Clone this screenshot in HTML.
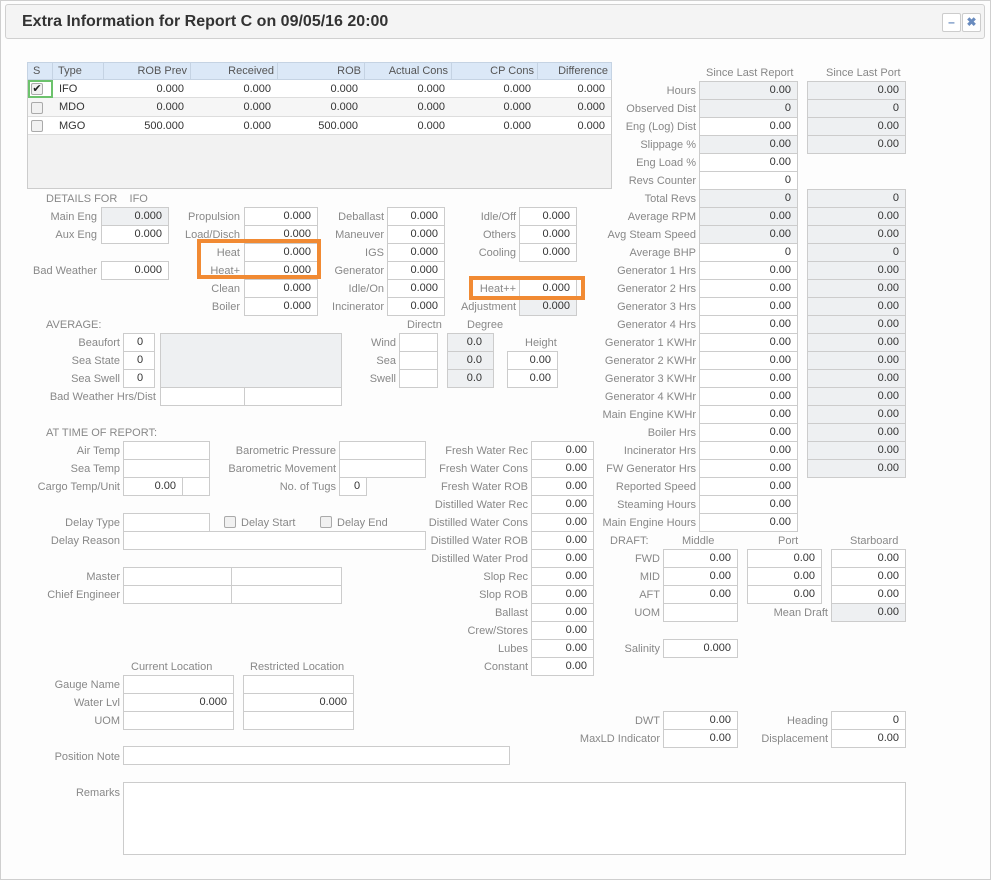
<!DOCTYPE html>
<html><head><meta charset="utf-8"><style>
*{box-sizing:border-box;margin:0;padding:0}
body{width:991px;height:881px;background:#fff;font-family:"Liberation Sans",Arial,sans-serif;font-size:11px;color:#333;position:relative;overflow:hidden}
#frame{position:absolute;left:0;top:0;width:991px;height:880px;border:1px solid #cfcfcf;background:#fdfdfd}
#hdr{position:absolute;left:5px;top:4px;width:980px;height:35px;border:1px solid #d0d0d0;border-radius:3px;background:#f4f4f4}
#hdr h1{position:absolute;left:16px;top:8px;font-size:16px;font-weight:bold;color:#333;letter-spacing:0px}
.btn{position:absolute;top:8px;width:19px;height:19px;border:1px solid #ccc;border-radius:2px;background:#fff;color:#6a8cbf;font-size:12px;text-align:center;line-height:17px;font-weight:bold}
.l{position:absolute;left:0;text-align:right;color:#888;height:18px;line-height:20px;white-space:nowrap}
.t{position:absolute;color:#888;height:18px;line-height:20px;white-space:nowrap}
.b{position:absolute;height:19px;border:1px solid #ccc;background:#fff;text-align:right;padding-right:6px;line-height:17px;color:#333}
.g{background:#eef0f2}
.o{position:absolute;border:4px solid #f18a33}
#tbl{position:absolute;left:27px;top:62px;width:585px;height:127px;border:1px solid #ccc;background:#f2f2f2}
.cb{position:absolute;width:12px;height:12px;border:1px solid #aaa;border-radius:2px;background:#f1f1f1}
</style></head><body>
<div id="frame"></div>
<div id="hdr"><h1>Extra Information for Report C on 09/05/16 20:00</h1>
<div class="btn" style="left:936px">–</div><div class="btn" style="left:956px">✖</div></div>

<div id="tbl"></div>
<div style="position:absolute;left:27px;top:62px;width:585px;height:18px;background:#dbe8f7;border:1px solid #c5d3e3"></div>
<div style="position:absolute;left:28px;top:80px;width:583px;height:18px;background:#fff;border-bottom:1px solid #ddd"></div>
<div style="position:absolute;left:28px;top:98px;width:583px;height:19px;background:#f6f6f6;border-bottom:1px solid #ddd"></div>
<div style="position:absolute;left:28px;top:117px;width:583px;height:18px;background:#fff;border-bottom:1px solid #ddd"></div>
<div style="position:absolute;left:52px;top:62px;width:1px;height:18px;background:#c5d3e3"></div>
<div style="position:absolute;left:103px;top:62px;width:1px;height:18px;background:#c5d3e3"></div>
<div style="position:absolute;left:190px;top:62px;width:1px;height:18px;background:#c5d3e3"></div>
<div style="position:absolute;left:277px;top:62px;width:1px;height:18px;background:#c5d3e3"></div>
<div style="position:absolute;left:364px;top:62px;width:1px;height:18px;background:#c5d3e3"></div>
<div style="position:absolute;left:451px;top:62px;width:1px;height:18px;background:#c5d3e3"></div>
<div style="position:absolute;left:537px;top:62px;width:1px;height:18px;background:#c5d3e3"></div>
<div class="t" style="left:33px;top:61px;color:#555">S</div>
<div class="t" style="left:58px;top:61px;color:#555">Type</div>
<div class="l" style="width:187px;top:61px;color:#555">ROB Prev</div>
<div class="l" style="width:274px;top:61px;color:#555">Received</div>
<div class="l" style="width:361px;top:61px;color:#555">ROB</div>
<div class="l" style="width:448px;top:61px;color:#555">Actual Cons</div>
<div class="l" style="width:534px;top:61px;color:#555">CP Cons</div>
<div class="l" style="width:608px;top:61px;color:#555">Difference</div>
<div style="position:absolute;left:28px;top:80px;width:25px;height:18px;border:2px solid #6cc26c"></div>
<div class="cb" style="left:31px;top:83px;font-size:11px;line-height:10px;text-align:center;color:#222">✔</div>
<div class="cb" style="left:31px;top:102px"></div>
<div class="cb" style="left:31px;top:120px"></div>
<div class="t" style="left:59px;top:79px;color:#333">IFO</div>
<div class="t" style="left:59px;top:97px;color:#333">MDO</div>
<div class="t" style="left:59px;top:116px;color:#333">MGO</div>
<div class="l" style="width:184px;top:79px;color:#333">0.000</div><div class="l" style="width:271px;top:79px;color:#333">0.000</div><div class="l" style="width:358px;top:79px;color:#333">0.000</div><div class="l" style="width:445px;top:79px;color:#333">0.000</div><div class="l" style="width:531px;top:79px;color:#333">0.000</div><div class="l" style="width:605px;top:79px;color:#333">0.000</div>
<div class="l" style="width:184px;top:97px;color:#333">0.000</div><div class="l" style="width:271px;top:97px;color:#333">0.000</div><div class="l" style="width:358px;top:97px;color:#333">0.000</div><div class="l" style="width:445px;top:97px;color:#333">0.000</div><div class="l" style="width:531px;top:97px;color:#333">0.000</div><div class="l" style="width:605px;top:97px;color:#333">0.000</div>
<div class="l" style="width:184px;top:116px;color:#333">500.000</div><div class="l" style="width:271px;top:116px;color:#333">0.000</div><div class="l" style="width:358px;top:116px;color:#333">500.000</div><div class="l" style="width:445px;top:116px;color:#333">0.000</div><div class="l" style="width:531px;top:116px;color:#333">0.000</div><div class="l" style="width:605px;top:116px;color:#333">0.000</div>

<div class="t" style="left:46px;top:189px">DETAILS FOR&nbsp;&nbsp;&nbsp; IFO</div>
<div class="l" style="width:97px;top:207px">Main Eng</div><div class="b g" style="left:101px;top:207px;width:68px">0.000</div>
<div class="l" style="width:97px;top:225px">Aux Eng</div><div class="b" style="left:101px;top:225px;width:68px">0.000</div>
<div class="l" style="width:97px;top:261px">Bad Weather</div><div class="b" style="left:101px;top:261px;width:68px">0.000</div>

<div class="l" style="width:240px;top:207px">Propulsion</div><div class="b" style="left:244px;top:207px;width:74px">0.000</div>
<div class="l" style="width:240px;top:225px">Load/Disch</div><div class="b" style="left:244px;top:225px;width:74px">0.000</div>
<div class="l" style="width:240px;top:243px">Heat</div><div class="b" style="left:244px;top:243px;width:74px">0.000</div>
<div class="l" style="width:240px;top:261px">Heat+</div><div class="b" style="left:244px;top:261px;width:74px">0.000</div>
<div class="l" style="width:240px;top:279px">Clean</div><div class="b" style="left:244px;top:279px;width:74px">0.000</div>
<div class="l" style="width:240px;top:297px">Boiler</div><div class="b" style="left:244px;top:297px;width:74px">0.000</div>

<div class="l" style="width:384px;top:207px">Deballast</div><div class="b" style="left:387px;top:207px;width:58px">0.000</div>
<div class="l" style="width:384px;top:225px">Maneuver</div><div class="b" style="left:387px;top:225px;width:58px">0.000</div>
<div class="l" style="width:384px;top:243px">IGS</div><div class="b" style="left:387px;top:243px;width:58px">0.000</div>
<div class="l" style="width:384px;top:261px">Generator</div><div class="b" style="left:387px;top:261px;width:58px">0.000</div>
<div class="l" style="width:384px;top:279px">Idle/On</div><div class="b" style="left:387px;top:279px;width:58px">0.000</div>
<div class="l" style="width:384px;top:297px">Incinerator</div><div class="b" style="left:387px;top:297px;width:58px">0.000</div>

<div class="l" style="width:516px;top:207px">Idle/Off</div><div class="b" style="left:519px;top:207px;width:58px">0.000</div>
<div class="l" style="width:516px;top:225px">Others</div><div class="b" style="left:519px;top:225px;width:58px">0.000</div>
<div class="l" style="width:516px;top:243px">Cooling</div><div class="b" style="left:519px;top:243px;width:58px">0.000</div>
<div class="l" style="width:516px;top:279px">Heat++</div><div class="b" style="left:519px;top:279px;width:58px">0.000</div>
<div class="l" style="width:516px;top:297px">Adjustment</div><div class="b g" style="left:519px;top:297px;width:58px">0.000</div>
<div class="o" style="left:197px;top:239px;width:124px;height:40px"></div>
<div class="o" style="left:469px;top:276px;width:116px;height:24px"></div>

<div class="t" style="left:706px;top:63px">Since Last Report</div>
<div class="t" style="left:826px;top:63px">Since Last Port</div>
<div class="l" style="width:696px;top:81px">Hours</div><div class="b g" style="left:699px;top:81px;width:99px">0.00</div><div class="b g" style="left:807px;top:81px;width:99px">0.00</div>
<div class="l" style="width:696px;top:99px">Observed Dist</div><div class="b g" style="left:699px;top:99px;width:99px">0</div><div class="b g" style="left:807px;top:99px;width:99px">0</div>
<div class="l" style="width:696px;top:117px">Eng (Log) Dist</div><div class="b" style="left:699px;top:117px;width:99px">0.00</div><div class="b g" style="left:807px;top:117px;width:99px">0.00</div>
<div class="l" style="width:696px;top:135px">Slippage %</div><div class="b g" style="left:699px;top:135px;width:99px">0.00</div><div class="b g" style="left:807px;top:135px;width:99px">0.00</div>
<div class="l" style="width:696px;top:153px">Eng Load %</div><div class="b" style="left:699px;top:153px;width:99px">0.00</div>
<div class="l" style="width:696px;top:171px">Revs Counter</div><div class="b" style="left:699px;top:171px;width:99px">0</div>
<div class="l" style="width:696px;top:189px">Total Revs</div><div class="b g" style="left:699px;top:189px;width:99px">0</div><div class="b g" style="left:807px;top:189px;width:99px">0</div>
<div class="l" style="width:696px;top:207px">Average RPM</div><div class="b g" style="left:699px;top:207px;width:99px">0.00</div><div class="b g" style="left:807px;top:207px;width:99px">0.00</div>
<div class="l" style="width:696px;top:225px">Avg Steam Speed</div><div class="b g" style="left:699px;top:225px;width:99px">0.00</div><div class="b g" style="left:807px;top:225px;width:99px">0.00</div>
<div class="l" style="width:696px;top:243px">Average BHP</div><div class="b" style="left:699px;top:243px;width:99px">0</div><div class="b g" style="left:807px;top:243px;width:99px">0</div>
<div class="l" style="width:696px;top:261px">Generator 1 Hrs</div><div class="b" style="left:699px;top:261px;width:99px">0.00</div><div class="b g" style="left:807px;top:261px;width:99px">0.00</div>
<div class="l" style="width:696px;top:279px">Generator 2 Hrs</div><div class="b" style="left:699px;top:279px;width:99px">0.00</div><div class="b g" style="left:807px;top:279px;width:99px">0.00</div>
<div class="l" style="width:696px;top:297px">Generator 3 Hrs</div><div class="b" style="left:699px;top:297px;width:99px">0.00</div><div class="b g" style="left:807px;top:297px;width:99px">0.00</div>
<div class="l" style="width:696px;top:315px">Generator 4 Hrs</div><div class="b" style="left:699px;top:315px;width:99px">0.00</div><div class="b g" style="left:807px;top:315px;width:99px">0.00</div>
<div class="l" style="width:696px;top:333px">Generator 1 KWHr</div><div class="b" style="left:699px;top:333px;width:99px">0.00</div><div class="b g" style="left:807px;top:333px;width:99px">0.00</div>
<div class="l" style="width:696px;top:351px">Generator 2 KWHr</div><div class="b" style="left:699px;top:351px;width:99px">0.00</div><div class="b g" style="left:807px;top:351px;width:99px">0.00</div>
<div class="l" style="width:696px;top:369px">Generator 3 KWHr</div><div class="b" style="left:699px;top:369px;width:99px">0.00</div><div class="b g" style="left:807px;top:369px;width:99px">0.00</div>
<div class="l" style="width:696px;top:387px">Generator 4 KWHr</div><div class="b" style="left:699px;top:387px;width:99px">0.00</div><div class="b g" style="left:807px;top:387px;width:99px">0.00</div>
<div class="l" style="width:696px;top:405px">Main Engine KWHr</div><div class="b" style="left:699px;top:405px;width:99px">0.00</div><div class="b g" style="left:807px;top:405px;width:99px">0.00</div>
<div class="l" style="width:696px;top:423px">Boiler Hrs</div><div class="b" style="left:699px;top:423px;width:99px">0.00</div><div class="b g" style="left:807px;top:423px;width:99px">0.00</div>
<div class="l" style="width:696px;top:441px">Incinerator Hrs</div><div class="b" style="left:699px;top:441px;width:99px">0.00</div><div class="b g" style="left:807px;top:441px;width:99px">0.00</div>
<div class="l" style="width:696px;top:459px">FW Generator Hrs</div><div class="b" style="left:699px;top:459px;width:99px">0.00</div><div class="b g" style="left:807px;top:459px;width:99px">0.00</div>
<div class="l" style="width:696px;top:477px">Reported Speed</div><div class="b" style="left:699px;top:477px;width:99px">0.00</div>
<div class="l" style="width:696px;top:495px">Steaming Hours</div><div class="b" style="left:699px;top:495px;width:99px">0.00</div>
<div class="l" style="width:696px;top:513px">Main Engine Hours</div><div class="b" style="left:699px;top:513px;width:99px">0.00</div>

<div class="t" style="left:610px;top:531px">DRAFT:</div>
<div class="t" style="left:682px;top:531px">Middle</div>
<div class="t" style="left:778px;top:531px">Port</div>
<div class="t" style="left:850px;top:531px">Starboard</div>
<div class="l" style="width:660px;top:549px">FWD</div><div class="b" style="left:663px;top:549px;width:75px">0.00</div><div class="b" style="left:747px;top:549px;width:75px">0.00</div><div class="b" style="left:831px;top:549px;width:75px">0.00</div>
<div class="l" style="width:660px;top:567px">MID</div><div class="b" style="left:663px;top:567px;width:75px">0.00</div><div class="b" style="left:747px;top:567px;width:75px">0.00</div><div class="b" style="left:831px;top:567px;width:75px">0.00</div>
<div class="l" style="width:660px;top:585px">AFT</div><div class="b" style="left:663px;top:585px;width:75px">0.00</div><div class="b" style="left:747px;top:585px;width:75px">0.00</div><div class="b" style="left:831px;top:585px;width:75px">0.00</div>
<div class="l" style="width:660px;top:603px">UOM</div><div class="b" style="left:663px;top:603px;width:75px"></div>
<div class="l" style="width:828px;top:603px">Mean Draft</div><div class="b g" style="left:831px;top:603px;width:75px">0.00</div>
<div class="l" style="width:660px;top:639px">Salinity</div><div class="b" style="left:663px;top:639px;width:75px">0.000</div>
<div class="l" style="width:660px;top:711px">DWT</div><div class="b" style="left:663px;top:711px;width:75px">0.00</div>
<div class="l" style="width:660px;top:729px">MaxLD Indicator</div><div class="b" style="left:663px;top:729px;width:75px">0.00</div>
<div class="l" style="width:828px;top:711px">Heading</div><div class="b" style="left:831px;top:711px;width:75px">0</div>
<div class="l" style="width:828px;top:729px">Displacement</div><div class="b" style="left:831px;top:729px;width:75px">0.00</div>

<div class="t" style="left:46px;top:315px">AVERAGE:</div>
<div class="t" style="left:407px;top:315px">Directn</div>
<div class="t" style="left:467px;top:315px">Degree</div>
<div class="t" style="left:525px;top:333px">Height</div>
<div class="l" style="width:120px;top:333px">Beaufort</div><div class="b" style="left:123px;top:333px;width:32px;text-align:left;padding-left:13px">0</div>
<div class="l" style="width:120px;top:351px">Sea State</div><div class="b" style="left:123px;top:351px;width:32px;text-align:left;padding-left:13px">0</div>
<div class="l" style="width:120px;top:369px">Sea Swell</div><div class="b" style="left:123px;top:369px;width:32px;text-align:left;padding-left:13px">0</div>
<div class="b g" style="left:160px;top:333px;width:182px;height:55px"></div>
<div class="l" style="width:156px;top:387px">Bad Weather Hrs/Dist</div>
<div class="b" style="left:160px;top:387px;width:85px"></div><div class="b" style="left:244px;top:387px;width:98px"></div>
<div class="l" style="width:396px;top:333px">Wind</div><div class="b" style="left:399px;top:333px;width:39px"></div><div class="b g" style="left:447px;top:333px;width:47px;padding-right:11px">0.0</div>
<div class="l" style="width:396px;top:351px">Sea</div><div class="b" style="left:399px;top:351px;width:39px"></div><div class="b g" style="left:447px;top:351px;width:47px;padding-right:11px">0.0</div>
<div class="l" style="width:396px;top:369px">Swell</div><div class="b" style="left:399px;top:369px;width:39px"></div><div class="b g" style="left:447px;top:369px;width:47px;padding-right:11px">0.0</div>
<div class="b" style="left:507px;top:351px;width:51px">0.00</div>
<div class="b" style="left:507px;top:369px;width:51px">0.00</div>

<div class="t" style="left:46px;top:423px">AT TIME OF REPORT:</div>
<div class="l" style="width:120px;top:441px">Air Temp</div><div class="b" style="left:123px;top:441px;width:87px"></div>
<div class="l" style="width:120px;top:459px">Sea Temp</div><div class="b" style="left:123px;top:459px;width:87px"></div>
<div class="l" style="width:120px;top:477px">Cargo Temp/Unit</div><div class="b" style="left:123px;top:477px;width:60px">0.00</div><div class="b" style="left:182px;top:477px;width:28px"></div>
<div class="l" style="width:336px;top:441px">Barometric Pressure</div><div class="b" style="left:339px;top:441px;width:87px"></div>
<div class="l" style="width:336px;top:459px">Barometric Movement</div><div class="b" style="left:339px;top:459px;width:87px"></div>
<div class="l" style="width:336px;top:477px">No. of Tugs</div><div class="b" style="left:339px;top:477px;width:28px;text-align:left;padding-left:14px">0</div>
<div class="l" style="width:120px;top:513px">Delay Type</div><div class="b" style="left:123px;top:513px;width:87px"></div>
<div class="cb" style="left:224px;top:516px"></div><div class="t" style="left:241px;top:513px">Delay Start</div>
<div class="cb" style="left:320px;top:516px"></div><div class="t" style="left:337px;top:513px">Delay End</div>
<div class="l" style="width:120px;top:531px">Delay Reason</div><div class="b" style="left:123px;top:531px;width:303px"></div>
<div class="l" style="width:120px;top:567px">Master</div><div class="b" style="left:123px;top:567px;width:109px"></div><div class="b" style="left:231px;top:567px;width:111px"></div>
<div class="l" style="width:120px;top:585px">Chief Engineer</div><div class="b" style="left:123px;top:585px;width:109px"></div><div class="b" style="left:231px;top:585px;width:111px"></div>

<div class="l" style="width:528px;top:441px">Fresh Water Rec</div><div class="b" style="left:531px;top:441px;width:63px">0.00</div>
<div class="l" style="width:528px;top:459px">Fresh Water Cons</div><div class="b" style="left:531px;top:459px;width:63px">0.00</div>
<div class="l" style="width:528px;top:477px">Fresh Water ROB</div><div class="b" style="left:531px;top:477px;width:63px">0.00</div>
<div class="l" style="width:528px;top:495px">Distilled Water Rec</div><div class="b" style="left:531px;top:495px;width:63px">0.00</div>
<div class="l" style="width:528px;top:513px">Distilled Water Cons</div><div class="b" style="left:531px;top:513px;width:63px">0.00</div>
<div class="l" style="width:528px;top:531px">Distilled Water ROB</div><div class="b" style="left:531px;top:531px;width:63px">0.00</div>
<div class="l" style="width:528px;top:549px">Distilled Water Prod</div><div class="b" style="left:531px;top:549px;width:63px">0.00</div>
<div class="l" style="width:528px;top:567px">Slop Rec</div><div class="b" style="left:531px;top:567px;width:63px">0.00</div>
<div class="l" style="width:528px;top:585px">Slop ROB</div><div class="b" style="left:531px;top:585px;width:63px">0.00</div>
<div class="l" style="width:528px;top:603px">Ballast</div><div class="b" style="left:531px;top:603px;width:63px">0.00</div>
<div class="l" style="width:528px;top:621px">Crew/Stores</div><div class="b" style="left:531px;top:621px;width:63px">0.00</div>
<div class="l" style="width:528px;top:639px">Lubes</div><div class="b" style="left:531px;top:639px;width:63px">0.00</div>
<div class="l" style="width:528px;top:657px">Constant</div><div class="b" style="left:531px;top:657px;width:63px">0.00</div>

<div class="t" style="left:131px;top:657px">Current Location</div>
<div class="t" style="left:250px;top:657px">Restricted Location</div>
<div class="l" style="width:120px;top:675px">Gauge Name</div><div class="b" style="left:123px;top:675px;width:111px"></div><div class="b" style="left:243px;top:675px;width:111px"></div>
<div class="l" style="width:120px;top:693px">Water Lvl</div><div class="b" style="left:123px;top:693px;width:111px">0.000</div><div class="b" style="left:243px;top:693px;width:111px">0.000</div>
<div class="l" style="width:120px;top:711px">UOM</div><div class="b" style="left:123px;top:711px;width:111px"></div><div class="b" style="left:243px;top:711px;width:111px"></div>
<div class="l" style="width:120px;top:747px">Position Note</div><div class="b" style="left:123px;top:746px;width:387px"></div>
<div class="l" style="width:120px;top:783px">Remarks</div><div class="b" style="left:123px;top:782px;width:783px;height:73px"></div>
</body></html>
